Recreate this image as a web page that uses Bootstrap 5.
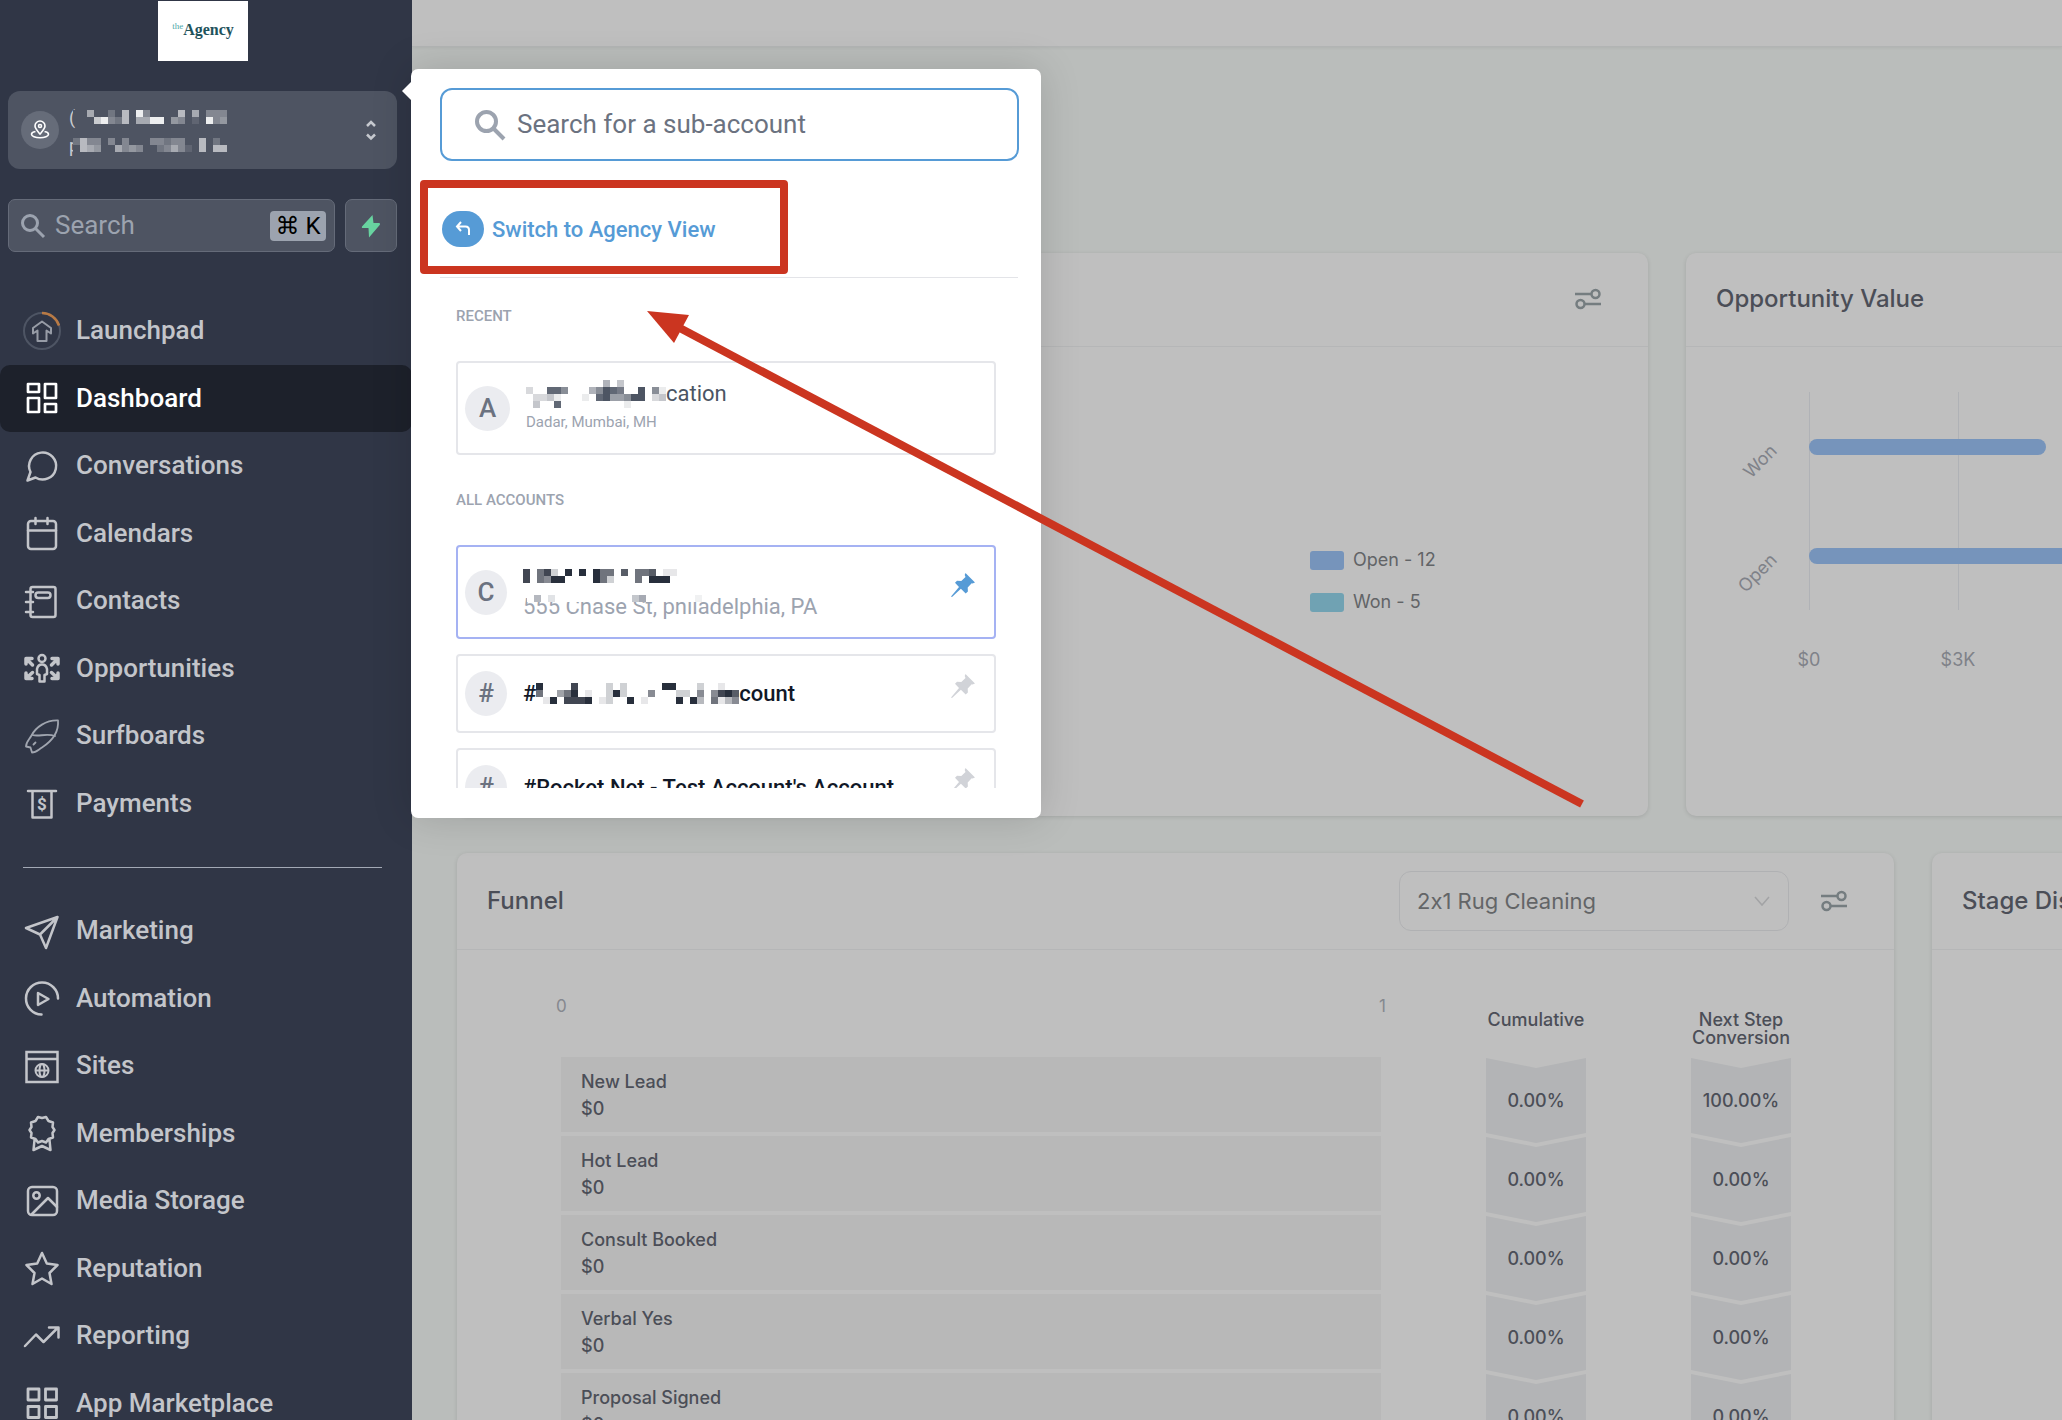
<!DOCTYPE html>
<html lang="en">
<head>
<meta charset="utf-8">
<meta name="viewport" content="width=device-width, initial-scale=1">
<title>Dashboard</title>
<link href="https://cdn.jsdelivr.net/npm/bootstrap@5.3.0/dist/css/bootstrap.min.css" rel="stylesheet">
<style>
  body { font-family: Roboto, "Liberation Sans", sans-serif; background: #babdbb; }
  svg { display: block; flex: none; }
  .shell { height: 100vh; overflow: hidden; }

  /* sidebar */
  .side { width: 412px; background: #303646; z-index: 2; }
  .side > * { flex-shrink: 0; }
  .brand { width: 90px; height: 60px; margin: 1px 0 30px 158px; font: bold 16px/58px "Liberation Serif", serif; color: #1f535c; }
  .brand small { font-size: 9px; font-weight: 400; line-height: 50px; color: #4fa8a8; }
  .acct { height: 78px; margin: 0 15px 30px 8px; padding: 0 16px 0 13px; border-radius: 12px; background: #4e5462; }
  .acct-pin { width: 38px; height: 38px; margin-right: 10px; background: #666c79; }
  .acct-line { height: 16px; font-size: 18px; line-height: 16px; color: #c9cbd0; }
  .acct-line + .acct-line { margin-top: 12px; }
  .acct-line svg { position: relative; background: #4e5462; }
  .peek { width: 4px; }
  .quick { gap: 10px; padding: 0 15px 0 8px; height: 53px; margin-bottom: 45px; }
  .quick-box { border: 1px solid #656b79; border-radius: 7px; background: #4e5462; }
  .quick input, .find input { border: 0; outline: 0; background: none; width: 0; min-width: 0; padding: 0; }
  .quick input { font-size: 26px; color: #9ca3af; }
  .quick input::placeholder { color: #9ca3af; }
  .quick kbd { flex: none; width: 56px; height: 30px; padding: 0; border-radius: 4px; background: #9ca3af; color: #000; font: 24px/30px Roboto, "DejaVu Sans", sans-serif; }
  .bolt { width: 52px; flex: none; }
  .menu { height: 540px; }
  .menu a { flex: 1 1 0; gap: 14px; padding-left: 22px; color: #c3c5ca; font-size: 26px; font-weight: 500; text-decoration: none; border-radius: 10px; }
  .menu a.active { background: #1d212b; color: #fff; }
  .menu svg { fill: none; stroke: currentColor; stroke-width: 2.5; stroke-linejoin: round; stroke-linecap: round; }
  .side hr { margin: 30px 30px 29px 23px; border-color: #a3a9b5; opacity: 1; }

  /* account switcher */
  .pop { left: 411px; top: 69px; width: 630px; height: 749px; padding: 19px 22px 30px 29px; border-radius: 7px; background: #fff; box-shadow: 0 0 40px rgba(0,0,0,.15); z-index: 3; }
  .pop-tip { left: -9px; top: 12px; }
  .find { height: 73px; padding: 0 24px 0 32px; gap: 11px; border: 2px solid #569bd6; border-radius: 12px; flex: none; }
  .find input { font-size: 26px; color: #6b7280; }
  .find input::placeholder { color: #6b7280; }
  .switcher { height: 117px; padding: 20px 0 0 2px; gap: 8px; border: 0; border-bottom: 1px solid #e3e4e8; background: none; color: #569bd6; font-size: 22px; font-weight: 500; flex: none; margin-right: 1px; }
  .switcher i { width: 42px; height: 36px; border-radius: 18px; background: #569bd6; }
  .list-area { padding: 0 23px 0 16px; overflow: hidden; min-height: 0; }
  .cap-label { font-size: 15px; line-height: 18px; font-weight: 500; color: #9ca3af; margin: 29px 0 36px; }
  .cap-label + .acc.last { margin-bottom: 36px; }
  .cap-label.all { margin-top: 0; }
  .acc { height: 79px; padding: 0 19px 0 7px; border: 2px solid #e5e6ea; border-radius: 4px; background: #fff; margin-bottom: 15px; flex: none; }
  .acc.tall { height: 94px; }
  .acc.on { border-color: #a5b2f3; }
  .face { width: 42px; height: 45px; margin-right: 16px; border-radius: 50%; background: #ebecf0; color: #6b7280; font-size: 26px; font-weight: 500; flex: none; }
  .face.wide { width: 45px; }
  .acc-name { min-height: 26px; font-size: 22px; line-height: 26px; font-weight: 500; color: #111827; white-space: nowrap; }
  .acc-name.soft { font-weight: 400; color: #4b5563; }
  .acc-sub { font-size: 15px; line-height: 20px; color: #9ca3af; }
  .acc-addr { font-size: 22px; line-height: 28px; color: #9ca3af; position: relative; }
  .acc-addr svg { position: absolute; left: 4px; top: 2px; background: #fff; }
  .acc-pin { margin-bottom: 15px; }

  /* annotation */
  .mark-box { left: 420px; top: 180px; width: 368px; height: 94px; border: 8px solid #cb3520; border-radius: 4px; z-index: 4; }
  .mark-arrow { left: 640px; top: 300px; z-index: 4; }

  /* dashboard */
  .board, .board select { font-family: Inter, "Liberation Sans", sans-serif; font-feature-settings: "calt" 0; }
  .topbar { height: 47px; background: #bfbfbf; border-bottom: 1px solid #b2b4b4; box-shadow: 0 1px 3px rgba(0,0,0,.06); flex: none; }
  .tiles { padding: 206px 0 0 45px; margin-right: -40px; display: grid; gap: 37px; }
  .tile-row { display: grid; gap: 38px; }
  .row-a { grid-template-columns: 1191fr 416fr; height: 563px; }
  .row-b { grid-template-columns: 1437fr 170fr; height: 640px; }
  .tile { background: #bfbfbf; border-radius: 10px; box-shadow: 0 1px 4px rgba(0,0,0,.12); min-width: 0; overflow: hidden; }
  .tile-head { height: 94px; padding: 0 47px 2px 30px; border-bottom: 1px solid #b5b6b7; }
  .row-b .tile-head { height: 97px; padding-bottom: 0; }
  .tile h2 { margin: 0; font-size: 24px; font-weight: 500; line-height: 30px; color: #4b4e57; white-space: nowrap; }
  .legend { padding: 202px 0 0 853px; font-size: 18px; line-height: 22px; color: #626467; }
  .legend li + li { margin-top: 20px; }
  .legend i { width: 34px; height: 19px; margin-right: 9px; border-radius: 3px; background: #7694bb; }
  .legend i.won { background: #70a2b3; }
  .chart text { font-size: 18px; fill: #7f8289; }
  .pick { width: 390px; height: 60px; margin-right: 32px; }
  .pick select { height: 60px; padding: 0 40px 0 17px; border: 1px solid #b0b1b3; border-radius: 12px; background: none; font-size: 22px; color: #636567; }
  .pick svg { position: absolute; right: 18px; top: 24px; pointer-events: none; }
  .funnel { padding-left: 104px; color: #4b4e57; font-size: 18px; font-weight: 500; }
  .funnel > * { flex: none; }
  .scale { height: 107px; padding-top: 45px; margin: 0 -5px; font-size: 17px; font-weight: 400; line-height: 22px; color: #85888f; }
  .bars { width: 820px; margin-right: 105px; }
  .stage { height: 75px; margin-bottom: 4px; padding: 11px 20px; background: #b8b8b8; line-height: 27px; }
  .rate { width: 100px; margin-right: 105px; text-align: center; }
  .rate:last-child { margin-right: 0; }
  .rate-head { height: 108px; padding-top: 61px; line-height: 18px; margin: 0 -6px; }
  .step { height: 85px; margin-bottom: -6px; line-height: 86px; background: #b3b4b6; clip-path: polygon(0 0, 50% 10px, 100% 0, 100% 75px, 50% 85px, 0 75px); }
</style>
<script src="https://cdn.jsdelivr.net/npm/bootstrap@5.3.0/dist/js/bootstrap.bundle.min.js"></script>
</head>
<body>
<div class="shell d-flex position-relative">

  <aside class="side d-flex flex-column flex-shrink-0">
    <div class="brand bg-white d-flex justify-content-center"><small>the</small>Agency</div>

    <div class="acct d-flex align-items-center">
      <span class="acct-pin rounded-circle d-flex align-items-center justify-content-center">
        <svg width="20" height="20" viewBox="0 0 20 20" fill="none" stroke="#fff" stroke-width="1.6"><path d="M10 14C7 10.500 5 8.500 5 6a5 5 0 0 1 10 0c0 2.500-2 4.500-5 8z"/><circle cx="10" cy="6" r="1.500"/><path d="M5.500 11.500C3 12 1.500 13 1.500 14.200c0 2 3.800 3.600 8.500 3.600s8.500-1.600 8.500-3.600c0-1.200-1.500-2.200-4-2.700"/></svg>
      </span>
      <div class="flex-grow-1 mt-1">
        <div class="acct-line d-flex"><span class="peek">(</span><svg data-cell="#ffffff" data-rows="..5..2.6.93....6.5.333|...79326.5599.43.1.934"></svg></div>
        <div class="acct-line d-flex"><span class="peek">p</span><svg data-cell="#ffffff" data-rows="2633.3.3...33233..6.2.|.654..5343..23531.6.66"></svg></div>
      </div>
      <svg width="20" height="24" viewBox="0 0 20 24" fill="none" stroke="#c6c9cf" stroke-width="2.500"><path d="M6 8l4-4 4 4M6 16.500l4 4 4-4"/></svg>
    </div>

    <div class="quick d-flex">
      <label class="quick-box d-flex align-items-center flex-grow-1 ps-2 pe-2">
        <svg class="ms-1 me-2" width="26" height="26" viewBox="0 0 26 26" fill="none" stroke="#9ca3af" stroke-width="3"><circle cx="9" cy="10" r="7.500"/><path d="M14.500 15.500l8.500 8.500"/></svg>
        <input class="flex-grow-1" type="search" placeholder="Search" aria-label="Search">
        <kbd class="text-center">⌘ K</kbd>
      </label>
      <button class="quick-box bolt d-flex align-items-center justify-content-center p-0" type="button" aria-label="Quick actions">
        <svg width="20" height="24" viewBox="0 0 20 24" fill="#68d3a0"><path d="M11.500 1L1 12.500c-.5 1 0 1.500 1 1.500h5.500L8 23.500 18.700 11c.8-1 .3-2-.7-2h-5.500z"/></svg>
      </button>
    </div>

    <nav class="menu d-flex flex-column">
      <a href="#" class="d-flex align-items-center"><svg width="40" height="40"><circle cx="20" cy="20" r="18" stroke="#4e5564" stroke-width="2"/><path stroke="#b87a45" d="M20 2a18 18 0 0 1 17 12.500" stroke-linecap="butt"/><path stroke="#979ca6" stroke-width="2" d="M20 10.500l9 6.500v5.500L24.500 19.500V30h-9V19.500L11 22.500V17z"/></svg>Launchpad</a>
      <a href="#" class="d-flex align-items-center active"><svg width="40" height="40"><path stroke-width="2.700" d="M6 6h11v8H6zM23 6h11v14H23zM6 20h11v14H6zM23 26h11v8H23z"/></svg>Dashboard</a>
      <a href="#" class="d-flex align-items-center"><svg width="40" height="40"><path d="M5.500 34.500l3-8.500a13.500 13.500 0 1 1 5 5.500z"/></svg>Conversations</a>
      <a href="#" class="d-flex align-items-center"><svg width="40" height="40"><rect x="6" y="8" width="28" height="28" rx="3"/><path d="M6 17.500h28M13.500 5v6M25.500 5v6"/></svg>Calendars</a>
      <a href="#" class="d-flex align-items-center"><svg width="40" height="40"><rect x="8.500" y="6" width="25" height="30" rx="2"/><path d="M4 11h7M4 21h7M4 31h7"/><rect x="13.500" y="11.500" width="15" height="5.500" rx="2.700"/></svg>Contacts</a>
      <a href="#" class="d-flex align-items-center"><svg width="40" height="40"><circle cx="20" cy="10.500" r="3.500"/><path d="M17.500 33.500V27l-2.500-1v-5q1-4.500 5-4.500t5 4.500v5l-2.500 1v6.500z"/><path stroke-width="3.500" d="M4 16v-5.500h6M5 11.500l5.500 5.500M30 10.500h6V16M35 11.500L29.500 17M4 25v5.500h6M5 29.500l5.500-5M36 25v5.500h-6M35 29.500l-5.500-5"/></svg>Opportunities</a>
      <a href="#" class="d-flex align-items-center"><svg width="40" height="40"><g stroke="#a0a5af" stroke-width="1.800"><path d="M36 4.500C24 4 14 11 9.500 19.500 7 24 4 26 4 30.500l4.500 1L10 36.500c4 0 6-2.500 10-5C30 25 37 16 36 4.500z"/><path d="M10.500 19c6 2 14-2 22.500 1M11.500 28.500l2-2"/></g></svg>Surfboards</a>
      <a href="#" class="d-flex align-items-center"><svg width="40" height="40"><path d="M6 8h28M10.500 8v26.500h19V8"/><text x="20" y="27" text-anchor="middle" font-size="17" font-weight="700" fill="currentColor" stroke="none">$</text></svg>Payments</a>
    </nav>

    <hr>

    <nav class="menu d-flex flex-column">
      <a href="#" class="d-flex align-items-center"><svg width="40" height="40"><path d="M35.500 6L4 17l14 6.500L24 37zM35 6.500L18 23.500"/></svg>Marketing</a>
      <a href="#" class="d-flex align-items-center"><svg width="40" height="40"><path d="M36 20.500A16 16 0 1 0 19.500 36.500M16 15l10.500 6L16 27z"/></svg>Automation</a>
      <a href="#" class="d-flex align-items-center"><svg width="40" height="40"><path stroke-linejoin="miter" d="M4.500 6h31v30h-31zM4.500 13h31"/><g stroke-width="2"><circle cx="20" cy="24.500" r="6.500"/><ellipse cx="20" cy="24.500" rx="2.500" ry="6.500"/><path d="M14 24.500h12"/></g></svg>Sites</a>
      <a href="#" class="d-flex align-items-center"><svg width="40" height="40"><path d="M16 4l4 1 4-1 2.500 4 4.500 1.500-.5 4.500 2 3-2 3 .5 4.500-4.500 1.500L24 29.500 20 28l-4 1.500L13.500 26 9 24.500 9.500 20l-2-3 2-3L9 9.500 13.500 8zM12.500 27L11.500 37l8.500-4 8.500 4-1-10"/></svg>Memberships</a>
      <a href="#" class="d-flex align-items-center"><svg width="40" height="40"><rect x="6" y="6" width="29" height="28" rx="4"/><circle cx="14.500" cy="14.500" r="3.200"/><path d="M10 33l16-16 9 9"/></svg>Media Storage</a>
      <a href="#" class="d-flex align-items-center"><svg width="40" height="40"><path d="M20 5l4.800 10.500L35.500 17l-8 8 2 11L20 30.500 10.500 36l2-11-8-8 10.700-1.500z"/></svg>Reputation</a>
      <a href="#" class="d-flex align-items-center"><svg width="40" height="40"><path d="M3 30l11-11.500 7.500 7.500L36 11.500M27 11.500h9.500v10"/></svg>Reporting</a>
      <a href="#" class="d-flex align-items-center"><svg width="40" height="40"><path stroke-width="2.800" d="M6 6h11v11H6zM23.500 6h11v11h-11zM6 23.500h11v11H6zM23.500 23.500h11v11h-11z"/></svg>App Marketplace</a>
    </nav>
  </aside>

  <main class="board flex-grow-1 overflow-hidden d-flex flex-column">
    <header class="topbar"></header>
    <div class="tiles">
      <div class="tile-row row-a">
        <section class="tile">
          <div class="tile-head d-flex align-items-center justify-content-end">
            <svg width="26" height="22" viewBox="0 0 26 22" fill="none" stroke="#757d80" stroke-width="2.500"><path d="M0 6h16M10 16h16"/><circle cx="20.500" cy="6" r="4"/><circle cx="5.500" cy="16" r="4"/></svg>
          </div>
          <ul class="legend list-unstyled m-0">
            <li class="d-flex align-items-center"><i></i>Open - 12</li>
            <li class="d-flex align-items-center"><i class="won"></i>Won - 5</li>
          </ul>
        </section>
        <section class="tile">
          <div class="tile-head d-flex align-items-center"><h2>Opportunity Value</h2></div>
          <svg class="chart" width="416" height="360">
            <path d="M123.500 45v218M272.500 45v218" stroke="#b0b2b6" fill="none"/>
            <rect x="123" y="92" width="237" height="16" rx="8" fill="#7694bb"/>
            <rect x="123" y="201" width="330" height="16" rx="8" fill="#7694bb"/>
            <text x="92" y="105" text-anchor="end" transform="rotate(-45 92 105)">Won</text>
            <text x="92" y="214" text-anchor="end" transform="rotate(-45 92 214)">Open</text>
            <text x="123" y="319" text-anchor="middle">$0</text>
            <text x="272" y="319" text-anchor="middle">$3K</text>
          </svg>
        </section>
      </div>

      <div class="tile-row row-b">
        <section class="tile">
          <div class="tile-head d-flex align-items-center">
            <h2 class="me-auto">Funnel</h2>
            <div class="pick position-relative">
              <select class="form-select shadow-none" aria-label="Pipeline"><option>2x1 Rug Cleaning</option></select>
              <svg width="18" height="12" viewBox="0 0 18 12" fill="none" stroke="#a2a3a5" stroke-width="1.500"><path d="M2 2l7 8 7-8"/></svg>
            </div>
            <svg width="26" height="22" viewBox="0 0 26 22" fill="none" stroke="#757d80" stroke-width="2.500"><path d="M0 6h16M10 16h16"/><circle cx="20.500" cy="6" r="4"/><circle cx="5.500" cy="16" r="4"/></svg>
          </div>
          <div class="funnel d-flex">
            <div class="bars">
              <div class="scale d-flex justify-content-between"><span>0</span><span>1</span></div>
              <div class="stage">New Lead<br>$0</div>
              <div class="stage">Hot Lead<br>$0</div>
              <div class="stage">Consult Booked<br>$0</div>
              <div class="stage">Verbal Yes<br>$0</div>
              <div class="stage">Proposal Signed<br>$0</div>
            </div>
            <div class="rate">
              <div class="rate-head">Cumulative</div>
              <div class="step">0.00%</div><div class="step">0.00%</div><div class="step">0.00%</div><div class="step">0.00%</div><div class="step">0.00%</div>
            </div>
            <div class="rate">
              <div class="rate-head">Next Step Conversion</div>
              <div class="step">100.00%</div><div class="step">0.00%</div><div class="step">0.00%</div><div class="step">0.00%</div><div class="step">0.00%</div>
            </div>
          </div>
        </section>
        <section class="tile">
          <div class="tile-head d-flex align-items-center"><h2>Stage Distribution</h2></div>
        </section>
      </div>
    </div>
  </main>

  <div class="pop position-absolute d-flex flex-column">
    <svg class="pop-tip position-absolute" width="10" height="20"><path d="M10 0L0 10l10 10z" fill="#fff"/></svg>
    <label class="find d-flex align-items-center">
      <svg width="32" height="32" viewBox="0 0 32 32" fill="none" stroke="#9ca3af" stroke-width="4"><circle cx="12.500" cy="12.500" r="9.500"/><path d="M19.500 19.500L30 30"/></svg>
      <input class="flex-grow-1" type="search" placeholder="Search for a sub-account" aria-label="Search for a sub-account">
    </label>
    <button class="switcher d-flex align-items-center" type="button">
      <i class="d-flex align-items-center justify-content-center"><svg width="16" height="16" viewBox="0 0 16 16" fill="none" stroke="#fff" stroke-width="2"><path d="M6 1L2 5.500 6 10M2 5.500h8.500Q14 5.500 14 9v5"/></svg></i>
      Switch to Agency View
    </button>
    <div class="list-area flex-grow-1 d-flex flex-column">
      <div class="cap-label">RECENT</div>
      <div class="acc tall last d-flex align-items-center">
        <span class="face wide d-flex align-items-center justify-content-center">A</span>
        <div class="pb-1">
          <div class="acc-name soft d-flex align-items-center"><svg data-cell="#3a4252" data-rows="...........4.3......|2..886...46987..9.61|.2231...1.8955699.23|.3..8.........1....."></svg>cation</div>
          <div class="acc-sub mt-1">Dadar, Mumbai, MH</div>
        </div>
      </div>
      <div class="cap-label all">ALL ACCOUNTS</div>
      <div class="acc tall on d-flex align-items-center">
        <span class="face d-flex align-items-center justify-content-center">C</span>
        <div class="me-auto">
          <div class="acc-name d-flex align-items-center"><svg data-cell="#111827" data-rows="8.682.9.9.966.7.667.11|8.6599....962...6.999."></svg></div>
          <div class="acc-addr mt-1">555 Chase St, philadelphia, PA<svg data-cell="#6b7280" data-rows=".5.2...........46.......1"></svg></div>
        </div>
        <svg class="acc-pin" width="24" height="24" viewBox="0 0 24 24" fill="#569bd6"><path d="M14.500 0L24 9.500l-2.500 1-.8-.3-4 4.200.2 4.200-2.200 1.900-4.800-4.800L1 24l-1-.5L8 14 4 9.700l2-2 4.300.3 4.200-4-.8-2z"/></svg>
      </div>
      <div class="acc d-flex align-items-center">
        <span class="face d-flex align-items-center justify-content-center">#</span>
        <div class="acc-name me-auto d-flex align-items-center">#<svg data-cell="#111827" data-rows="9....8....2.2.....99...2..1..|6..469.1..292...5...22.5.5897|.19.8889.12..9.1....9.93.6135"></svg>count</div>
        <svg class="acc-pin" width="24" height="24" viewBox="0 0 24 24" fill="#d1d3d8"><path d="M14.500 0L24 9.500l-2.500 1-.8-.3-4 4.200.2 4.200-2.200 1.900-4.800-4.800L1 24l-1-.5L8 14 4 9.700l2-2 4.300.3 4.200-4-.8-2z"/></svg>
      </div>
      <div class="acc d-flex align-items-center">
        <span class="face d-flex align-items-center justify-content-center">#</span>
        <div class="acc-name me-auto">#Rocket Net - Test Account's Account</div>
        <svg class="acc-pin" width="24" height="24" viewBox="0 0 24 24" fill="#d1d3d8"><path d="M14.500 0L24 9.500l-2.500 1-.8-.3-4 4.200.2 4.200-2.200 1.900-4.800-4.800L1 24l-1-.5L8 14 4 9.700l2-2 4.300.3 4.200-4-.8-2z"/></svg>
      </div>
    </div>
  </div>

  <div class="mark-box position-absolute"></div>
  <svg class="mark-arrow position-absolute" width="960" height="520"><path d="M942 504L36 26" stroke="#cb3520" stroke-width="8" fill="none"/><path d="M7 11l42 4-15 28z" fill="#cb3520"/></svg>
</div>

<script>
  // Redacted names: each digit is one 7px block, its value the opacity in tenths.
  document.querySelectorAll('svg[data-rows]').forEach(function (svg) {
    var rows = svg.dataset.rows.split('|'), out = '';
    rows.forEach(function (row, y) {
      row.split('').forEach(function (c, x) {
        if (c !== '.') out += '<rect x="' + x * 7 + '" y="' + y * 7 + '" width="7" height="7" opacity="' + c / 10 + '"/>';
      });
    });
    svg.setAttribute('width', rows[0].length * 7);
    svg.setAttribute('height', rows.length * 7);
    svg.setAttribute('fill', svg.dataset.cell);
    svg.innerHTML = out;
  });
</script>
</body>
</html>
